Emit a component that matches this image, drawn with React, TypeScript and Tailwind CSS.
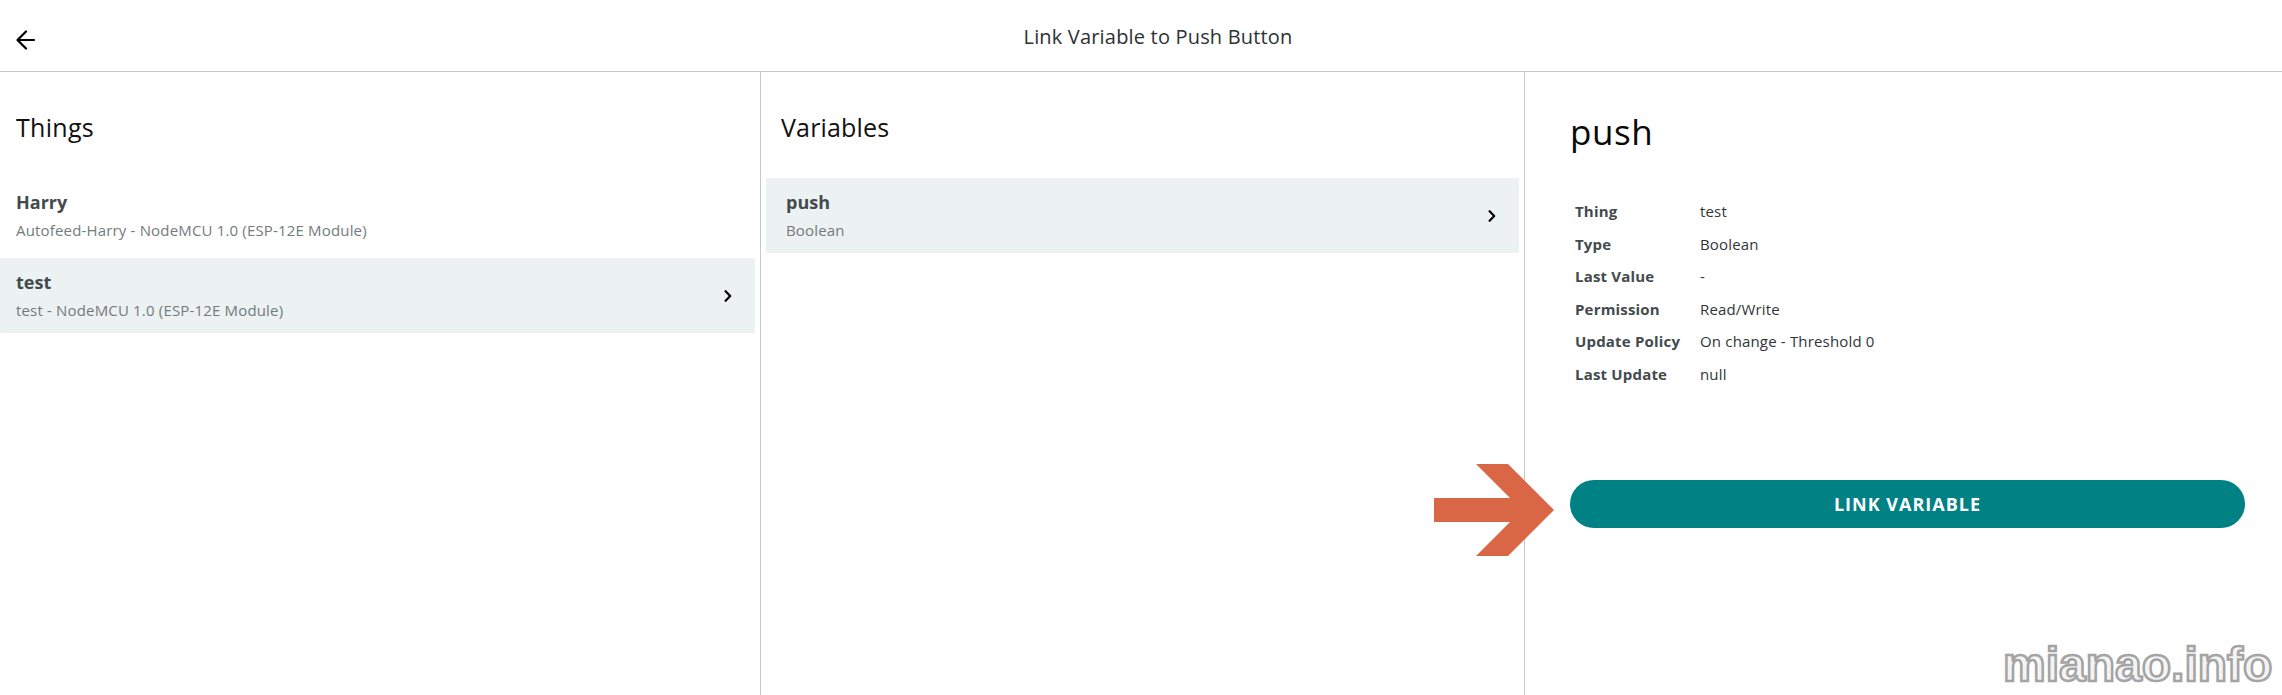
import React from "react";

type Item = { name: string; detail: string; selected?: boolean };

const things: Item[] = [
  { name: "Harry", detail: "Autofeed-Harry - NodeMCU 1.0 (ESP-12E Module)" },
  { name: "test", detail: "test - NodeMCU 1.0 (ESP-12E Module)", selected: true },
];

const variables: Item[] = [{ name: "push", detail: "Boolean", selected: true }];

const properties: [string, string][] = [
  ["Thing", "test"],
  ["Type", "Boolean"],
  ["Last Value", "-"],
  ["Permission", "Read/Write"],
  ["Update Policy", "On change - Threshold 0"],
  ["Last Update", "null"],
];

function Chevron() {
  return (
    <svg width="8" height="12" viewBox="0 0 8 12" fill="none" stroke="#000" strokeWidth="2.2" strokeLinecap="round" strokeLinejoin="round">
      <path d="M1.6 1.2 6.2 6 1.6 10.8" />
    </svg>
  );
}

function Row({ item, inset }: { item: Item; inset: string }) {
  return (
    <li className={`flex h-[75px] items-center justify-between rounded-[1px] pr-[23px] ${inset} ${item.selected ? "bg-[#ecf1f1]" : ""}`}>
      <div className="flex flex-col self-start pt-3">
        <span className="text-[18px] leading-[24px] font-bold text-[#434a4d]">{item.name}</span>
        <span className="mt-1 text-[15px] leading-[24px] tracking-[0.17px] text-[#747b7d]">{item.detail}</span>
      </div>
      {item.selected && <Chevron />}
    </li>
  );
}

export default function App() {
  return (
    <div className="relative flex h-[695px] w-[2282px] flex-col overflow-hidden bg-white font-['Open_Sans',sans-serif] text-black">
      <header className="flex h-[72px] shrink-0 items-center border-b border-[#c6c9c9] pl-4">
        <button className="mt-2 w-[18px] shrink-0" aria-label="Back">
          <svg width="20" height="20" viewBox="0 0 20 20" fill="none" stroke="#000" strokeWidth="2.2" strokeLinecap="round" strokeLinejoin="round">
            <path d="M18 10H2M10 1.5 1.5 10 10 18.5" />
          </svg>
        </button>
        <h1 className="flex-1 pt-0.5 text-center text-[20px] leading-[28px] tracking-[0.18px] text-[#2c3233]">Link Variable to Push Button</h1>
      </header>
      <main className="flex min-h-0 flex-1">
        <section className="w-[761px] shrink-0 border-r border-[#c6c9c9] pr-[5px]">
          <h2 className="mt-[35px] ml-4 text-[25px] leading-[40px] tracking-[0.3px] text-[#111]">Things</h2>
          <ul className="mt-[31px] flex flex-col gap-[5px]">
            {things.map((t) => (
              <Row key={t.name} item={t} inset="pl-4" />
            ))}
          </ul>
        </section>
        <section className="w-[764px] shrink-0 border-r border-[#c6c9c9] px-[5px]">
          <h2 className="mt-[35px] ml-[15px] text-[25px] leading-[40px] tracking-[0.17px] text-[#111]">Variables</h2>
          <ul className="mt-[31px]">
            {variables.map((v) => (
              <Row key={v.name} item={v} inset="pl-5" />
            ))}
          </ul>
        </section>
        <section className="flex flex-1 flex-col pr-[37px] pl-[45px]">
          <h2 className="mt-9 text-[35px] leading-[47px] tracking-[0.6px] text-[#0a0a0a]">push</h2>
          <dl className="mt-[40px] ml-[5px] grid grid-cols-[125px_1fr] text-[15px] leading-[32.6px]">
            {properties.map(([label, value]) => (
              <React.Fragment key={label}>
                <dt className="font-bold tracking-[0.18px] text-[#434a4d]">{label}</dt>
                <dd className="tracking-[0.17px] text-[#303637]">{value}</dd>
              </React.Fragment>
            ))}
          </dl>
          <button className="mt-[89.4px] h-12 rounded-full bg-[#008184] text-[18px] leading-[24px] font-bold tracking-[1px] text-white">
            LINK VARIABLE
          </button>
        </section>
      </main>
      <svg className="absolute top-[464px] left-[1434px]" width="120" height="92" viewBox="0 0 120 92" fill="#d96746">
        <path d="M0 34H76L42 0H74L120 46 74 92H42L76 58H0Z" />
      </svg>
      <div className="absolute top-[637px] left-[2003px] font-['Liberation_Sans',sans-serif] text-[48px] leading-[56px] font-bold text-[#f4f4f4] [-webkit-text-stroke:2.5px_#a4a4a4]">
        mianao.info
      </div>
    </div>
  );
}
